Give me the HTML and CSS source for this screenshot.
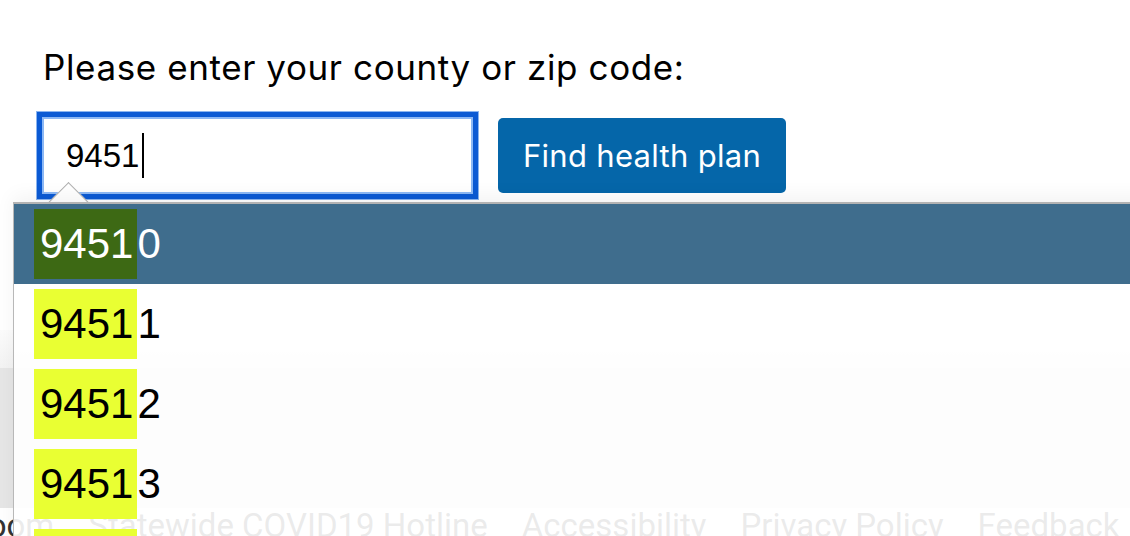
FILE: index.html
```html
<!DOCTYPE html>
<html lang="en">
<head>
<meta charset="utf-8">
<title>Find health plan</title>
<link rel="stylesheet" href="styles.css">
</head>
<body>
<div class="page">
  <section class="search">
    <label class="label" for="zip">Please enter your county or zip code:</label>
    <div class="form-row">
      <div class="field">
        <div class="input" id="zip"><span class="value">9451</span><span class="caret"></span></div>
        <div class="pointer"></div>
        <ul class="listbox">
          <li class="option selected"><mark class="match">9451</mark>0</li>
          <li class="option"><mark class="match">9451</mark>1</li>
          <li class="option"><mark class="match">9451</mark>2</li>
          <li class="option"><mark class="match">9451</mark>3</li>
          <li class="option"><mark class="match">9451</mark>4</li>
        </ul>
      </div>
      <button class="btn" type="button">Find health plan</button>
    </div>
  </section>
  <div class="band-top"></div>
  <div class="band"></div>
  <footer class="footer">
    <a class="flink">Newsroom</a>
    <a class="flink">Statewide COVID19 Hotline</a>
    <a class="flink">Accessibility</a>
    <a class="flink">Privacy Policy</a>
    <a class="flink">Feedback</a>
  </footer>
</div>
</body>
</html>
```
FILE: styles.css
```css
html, body {
  margin: 0;
  padding: 0;
  overflow: hidden;
  background: #fff;
}
.page {
  width: 1130px;
  height: 536px;
  overflow: hidden;
  font-family: Inter, Roboto, "Liberation Sans", sans-serif;
  color: #000;
}
.search {
  padding: 44px 0 0 43px;
  height: 330px;
  box-sizing: border-box;
}
.label {
  display: block;
  font-size: 35px;
  letter-spacing: 0.6px;
  line-height: 46px;
  height: 46px;
  margin-bottom: 21px;
}
.form-row {
  display: flex;
  align-items: flex-start;
  gap: 19px;
  margin-left: -7px;
}
.field {
  position: relative;
  width: 443px;
  height: 89px;
  padding: 1px;
  box-sizing: border-box;
}
.input {
  display: flex;
  align-items: center;
  height: 87px;
  box-sizing: border-box;
  border: 5px solid #0b5ad4;
  box-shadow: 0 0 0 1px #8ab4f0, inset 0 0 0 2px #8cb8f5;
  padding-left: 24px;
  font-family: "Liberation Sans", Arial, sans-serif;
  font-size: 33px;
  background: #fff;
}
.caret {
  display: inline-block;
  width: 2px;
  height: 45px;
  background: #000;
  margin-left: 3px;
}
.pointer {
  position: absolute;
  left: 18px;
  top: 77px;
  width: 28px;
  height: 28px;
  background: #fff;
  border-left: 1px solid #b0b0b0;
  border-top: 1px solid #b0b0b0;
  transform: rotate(45deg);
  z-index: 1;
}
.listbox {
  position: absolute;
  left: -23px;
  top: 91px;
  width: 1140px;
  margin: 0;
  padding: 0;
  list-style: none;
  background: rgba(255, 255, 255, 0.9);
  border-top: 2px solid #b3b3b3;
  border-left: 1px solid #b8b8b8;
  box-shadow: 0 -6px 18px rgba(0, 0, 0, 0.05);
  z-index: 2;
  font-family: "Liberation Sans", Arial, sans-serif;
  font-size: 42px;
}
.option {
  display: flex;
  align-items: center;
  height: 80px;
  padding-left: 20px;
  color: #000;
}
.option.selected {
  background: #3f6d8d;
  color: #fff;
}
.match {
  display: inline-block;
  height: 70px;
  line-height: 70px;
  padding: 0 4px 0 6px;
  background: #e9ff33;
  color: #000;
}
.selected .match {
  background: #3d6914;
  color: #fff;
}
.btn {
  margin-top: 7px;
  width: 288px;
  height: 75px;
  border: 0;
  border-radius: 5px;
  background: #0566a9;
  color: #fff;
  font-family: Inter, Roboto, "Liberation Sans", sans-serif;
  font-size: 31px;
  letter-spacing: 0.3px;
  padding: 0;
}
.band-top {
  height: 38px;
  background: linear-gradient(#fcfcfc, #f3f3f3);
}
.band {
  height: 140px;
  background: #e6e6e6;
}
.footer {
  display: flex;
  gap: 34px;
  margin-left: -106px;
  margin-top: 1px;
  font-size: 33px;
  line-height: 33px;
  white-space: nowrap;
  font-family: Roboto, "Liberation Sans", sans-serif;
}
.flink {
  color: #333;
}
```
